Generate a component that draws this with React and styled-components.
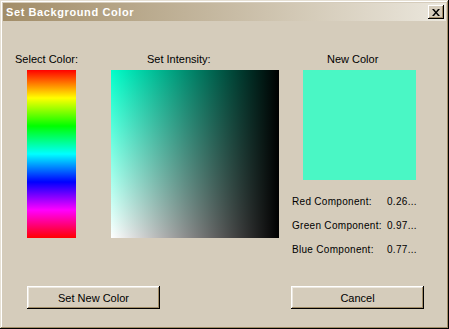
import React from 'react';
import styled, { createGlobalStyle } from 'styled-components';

const GlobalStyle = createGlobalStyle`
  html, body {
    margin: 0;
    padding: 0;
    background: #d5ccbb;
  }
  * {
    box-sizing: border-box;
  }
`;

const App = () => {
  const hue = '#00ffca';
  const components = [
    { name: 'Red Component:', value: '0.26...' },
    { name: 'Green Component:', value: '0.97...' },
    { name: 'Blue Component:', value: '0.77...' },
  ];

  return (
    <>
      <GlobalStyle />
      <Window>
        <TitleBar>
          <Title>Set Background Color</Title>
          <CloseButton aria-label="Close">
            <svg width="8" height="7" viewBox="0 0 8 7">
              <path d="M0 0h2l2 2.5L6 0h2L5 3.5 8 7H6L4 4.5 2 7H0l3-3.5z" fill="#000" />
            </svg>
          </CloseButton>
        </TitleBar>

        <Columns>
          <Column>
            <Label>Select Color:</Label>
            <Spectrum />
          </Column>

          <Column>
            <Label $indent={36}>Set Intensity:</Label>
            <Intensity $hue={hue} />
          </Column>

          <Column>
            <Label $indent={35}>New Color</Label>
            <Swatch $color="#4af7c5" />
            <ComponentList>
              {components.map((c) => (
                <ComponentRow key={c.name}>
                  <ComponentName>{c.name}</ComponentName>
                  <ComponentValue>{c.value}</ComponentValue>
                </ComponentRow>
              ))}
            </ComponentList>
          </Column>
        </Columns>

        <Footer>
          <Button>Set New Color</Button>
          <Button>Cancel</Button>
        </Footer>
      </Window>
    </>
  );
};

const Window = styled.div`
  width: 449px;
  height: 329px;
  display: flex;
  flex-direction: column;
  padding: 3px;
  background: #d5ccbb;
  box-shadow:
    inset -1px -1px 0 #000,
    inset 1px 1px 0 #e6e0d4,
    inset -2px -2px 0 #a28d68,
    inset 2px 2px 0 #ffffff;
  font-family: 'Liberation Sans', Arial, sans-serif;
  font-size: 11px;
  color: #000;
`;

const TitleBar = styled.div`
  height: 18px;
  display: flex;
  align-items: center;
  justify-content: space-between;
  padding: 0 2px 0 3px;
  background: linear-gradient(to right, #a28d68, #ebe7dd);
`;

const Title = styled.span`
  color: #fff;
  font-weight: bold;
  font-size: 11px;
  letter-spacing: 0.6px;
`;

const CloseButton = styled.button`
  width: 16px;
  height: 14px;
  padding: 0;
  border: none;
  display: flex;
  align-items: center;
  justify-content: center;
  background: #d5ccbb;
  box-shadow:
    inset -1px -1px 0 #000,
    inset 1px 1px 0 #ffffff,
    inset -2px -2px 0 #a28d68;
`;

const Columns = styled.div`
  display: grid;
  grid-template-columns: 96px 181px auto;
  padding: 32px 0 0 12px;
`;

const Column = styled.div`
  display: flex;
  flex-direction: column;
  align-items: flex-start;
`;

const Label = styled.div`
  height: 13px;
  line-height: 13px;
  margin-left: ${(p) => p.$indent || 0}px;
  margin-bottom: 4px;
  white-space: nowrap;
`;

const Spectrum = styled.div`
  width: 49px;
  height: 168px;
  margin-left: 12px;
  background: linear-gradient(
    to bottom,
    #ff0000 0%,
    #ffff00 16.67%,
    #00ff00 33.33%,
    #00ffff 50%,
    #0000ff 66.67%,
    #ff00ff 83.33%,
    #ff0000 100%
  );
`;

const Intensity = styled.div`
  width: 168px;
  height: 168px;
  background:
    linear-gradient(to right, rgba(0, 0, 0, 0), #000),
    linear-gradient(to bottom, ${(p) => p.$hue}, #ffffff);
`;

const Swatch = styled.div`
  width: 113px;
  height: 110px;
  margin-left: 11px;
  background: ${(p) => p.$color};
`;

const ComponentList = styled.div`
  display: flex;
  flex-direction: column;
  margin-top: 16px;
`;

const ComponentRow = styled.div`
  display: grid;
  grid-template-columns: 95px auto;
  height: 24px;
  font-size: 10px;
  letter-spacing: 0.3px;
`;

const ComponentName = styled.span`
  white-space: nowrap;
`;

const ComponentValue = styled.span`
  white-space: nowrap;
`;

const Footer = styled.div`
  margin-top: auto;
  display: flex;
  justify-content: space-between;
  padding: 0 22px 17px 24px;
`;

const Button = styled.button`
  width: 133px;
  height: 23px;
  border: none;
  padding: 0;
  background: #d5ccbb;
  font-family: 'Liberation Sans', Arial, sans-serif;
  font-size: 11px;
  color: #000;
  box-shadow:
    inset -1px -1px 0 #000,
    inset 1px 1px 0 #ffffff,
    inset -2px -2px 0 #a28d68,
    inset 2px 2px 0 #ece7de;
`;

export default App;
